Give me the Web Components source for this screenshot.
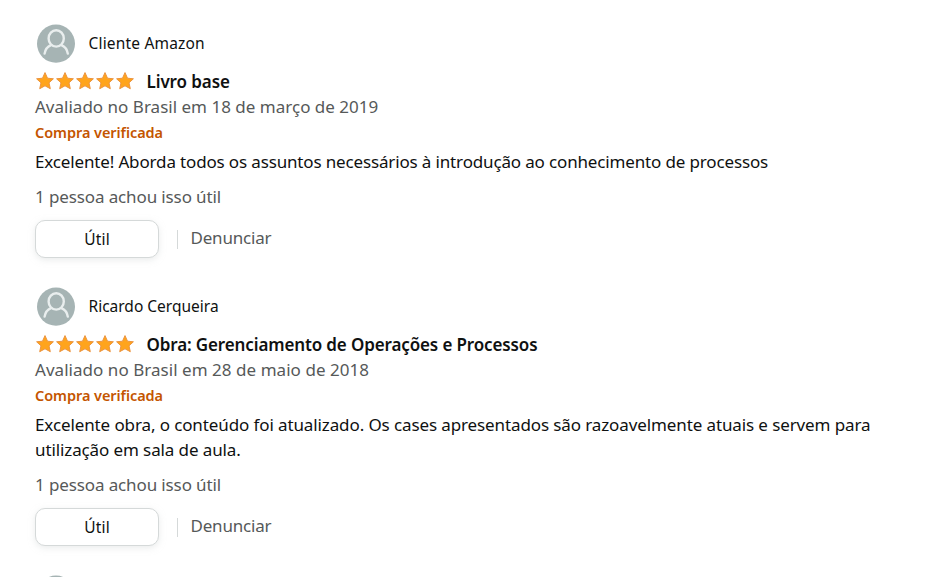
<!DOCTYPE html>
<html lang="pt-BR">
<head>
<meta charset="utf-8">
<title>Avaliações</title>
<style>
html,body{margin:0;height:577px;overflow:hidden;background:#fff}
body{font-family:"Noto Sans","Open Sans",sans-serif;color:#0f1111}
</style>
</head>
<body>
<review-list>
  <customer-review name="Cliente Amazon" style="--name-ls:.18px;--title-ls:-.1px;--date-ls:.01px;--body-ls:-.15px">
    <span slot="title">Livro base</span>
    <span slot="date">Avaliado no Brasil em 18 de março de 2019</span>
    <span slot="body">Excelente! Aborda todos os assuntos necessários à introdução ao conhecimento de processos</span>
    <span slot="votes">1 pessoa achou isso útil</span>
  </customer-review>
  <customer-review name="Ricardo Cerqueira" style="--name-ls:0px;--title-ls:-.13px;--date-ls:.04px;--body-ls:-.11px">
    <span slot="title">Obra: Gerenciamento de Operações e Processos</span>
    <span slot="date">Avaliado no Brasil em 28 de maio de 2018</span>
    <span slot="body">Excelente obra, o conteúdo foi atualizado. Os cases apresentados são razoavelmente atuais e servem para utilização em sala de aula.</span>
    <span slot="votes">1 pessoa achou isso útil</span>
  </customer-review>
  <user-avatar style="height:2px"></user-avatar>
</review-list>
<script>
class BaseElement extends HTMLElement {
  connectedCallback() {
    if (!this.shadowRoot) this.attachShadow({mode: 'open'}).innerHTML = this.render();
  }
}

customElements.define('review-list', class extends BaseElement {
  render() {
    return `<style>
      :host{box-sizing:border-box;display:flex;flex-direction:column;gap:29px;height:577px;overflow:hidden;padding:24px 50px 0 35px}
    </style><slot></slot>`;
  }
});

customElements.define('user-avatar', class extends BaseElement {
  render() {
    return `<style>
      :host{display:block;width:38px;height:39px;margin-left:2px;flex:none;overflow:hidden}
      svg{display:block}
    </style>
    <svg width="38" height="39" viewBox="0 0 38 39">
      <ellipse cx="19" cy="19.7" rx="19" ry="19.1" fill="#a6b4b4"/>
      <g fill="none" stroke="#e9eeee" stroke-width="2.4" stroke-linecap="round">
        <ellipse cx="19.2" cy="14.4" rx="7.6" ry="8.2"/>
        <path d="M7.6 29.6C8.3 25.6 10.6 22.6 14 21.2M24.4 21.2C27.8 22.6 30.1 25.6 30.8 29.6"/>
      </g>
    </svg>`;
  }
});

customElements.define('star-rating', class extends BaseElement {
  render() {
    const star = '<svg width="20" height="20" viewBox="0 0 20 20"><path d="M10 1.6L12.5 7.2L18.4 7.8L14 11.8L15.3 17.7L10 14.8L4.7 17.7L6 11.8L1.6 7.8L7.5 7.2Z" fill="#ffa41c" stroke="#ec9440" stroke-width="1" stroke-linejoin="round"/></svg>';
    return `<style>
      :host{display:flex;width:100px;height:20px;flex:none}
      svg{display:block}
    </style>${star.repeat(5)}`;
  }
});

customElements.define('helpful-button', class extends BaseElement {
  render() {
    return `<style>
      :host{display:block;width:124px;height:38px;flex:none}
      button{box-sizing:border-box;width:100%;height:100%;padding:0;border:1px solid #d5d9d9;border-radius:10px;
        background:#fff;box-shadow:0 2px 6px rgba(213,217,217,.5);color:#0f1111;
        font:15.5px "Noto Sans",sans-serif;letter-spacing:.2px}
    </style><button type="button"><slot></slot></button>`;
  }
});

customElements.define('customer-review', class extends BaseElement {
  render() {
    return `<style>
      :host{display:block;font-size:17px;line-height:25px}
      .profile{display:flex;align-items:center;gap:13.5px;height:39px;font-size:15.5px;letter-spacing:var(--name-ls,0)}
      .heading{display:flex;gap:11.5px;margin-top:6px;height:25px}
      .title{font-weight:600;letter-spacing:var(--title-ls,0)}
      star-rating{margin-top:2px}
      .date{color:#565959;letter-spacing:var(--date-ls,0)}
      .badge{color:#c45500;font-size:14.5px;font-weight:600;line-height:20px;margin-top:3px;letter-spacing:-.06px}
      .body{margin-top:7px;letter-spacing:var(--body-ls,0)}
      .votes{color:#565959;margin-top:10px;letter-spacing:-.12px}
      .actions{display:flex;align-items:center;margin-top:11px;height:38px}
      .divider{width:1px;height:19px;margin:0 12.5px 0 18px;background:#d5d9d9}
      .report{color:#565959;letter-spacing:-.2px;margin-top:-3px}
    </style>
    <div class="profile"><user-avatar></user-avatar><span>${this.getAttribute('name')}</span></div>
    <div class="heading"><star-rating></star-rating><span class="title"><slot name="title"></slot></span></div>
    <div class="date"><slot name="date"></slot></div>
    <div class="badge">Compra verificada</div>
    <div class="body"><slot name="body"></slot></div>
    <div class="votes"><slot name="votes"></slot></div>
    <div class="actions"><helpful-button>Útil</helpful-button><span class="divider"></span><span class="report">Denunciar</span></div>`;
  }
});
</script>
</body>
</html>
